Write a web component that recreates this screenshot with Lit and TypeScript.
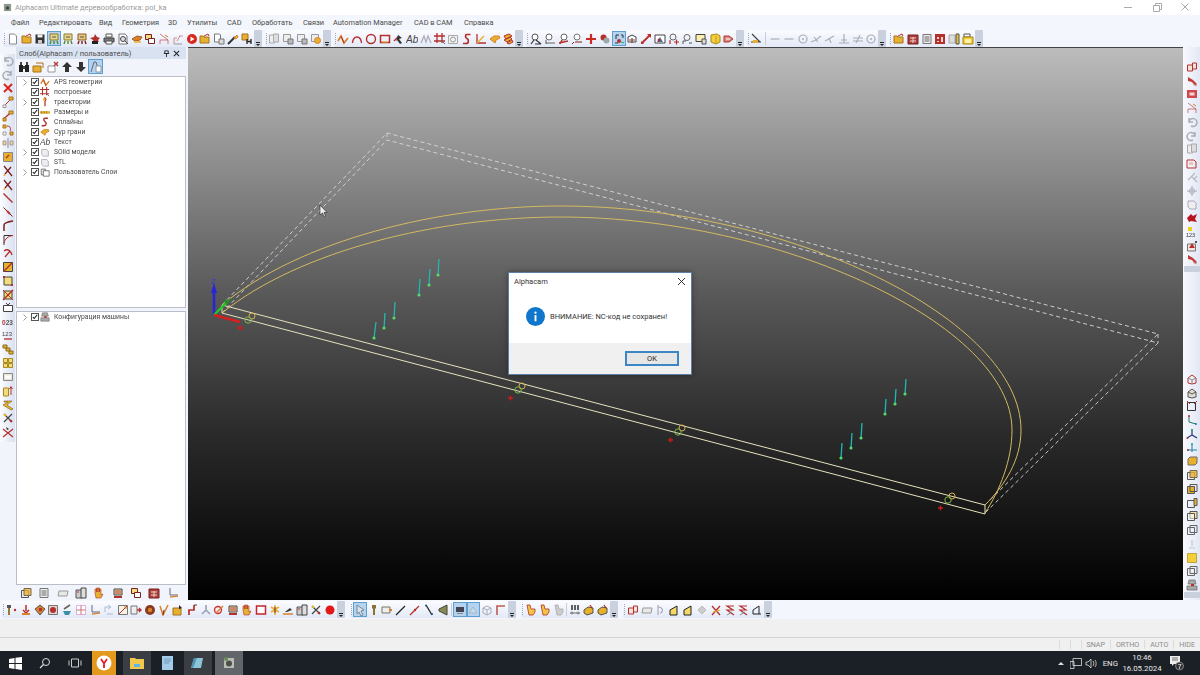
import { LitElement, html, css, svg } from 'lit';
import { customElement } from 'lit/decorators.js';

const R = '#b5302c', Y = '#e6b12e', O = '#d9822b', K = '#3a3a3a', D = '#7c1f1f', T = '#3d8fa8', L = '#f5dc7a';

// toolbar glyphs, all on a 12x12 box
const I: Record<string, any> = {
  doc: svg`<path d="M2.5 1h5l2 2v8h-7z" fill="#fff" stroke="#8a8a8a"/>`,
  open: svg`<path d="M1 10V3h3l1 1h5v6z" fill="${Y}" stroke="#a8701c"/><path d="M5 3l4-2 1 2" fill="none" stroke="${R}"/>`,
  save: svg`<path d="M1.500 1.500h9v9h-9z" fill="#333"/><path d="M3.500 1.500h5v3h-5z" fill="#eee"/><path d="M4 7h4v3.500H4z" fill="#ccc"/>`,
  nc: svg`<path d="M2 1h8v6H2z" fill="#e8d68a" stroke="#8a7a30"/><path d="M3 8l-1 3M6 8v3M9 8l1 3" stroke="#4f8a3a" stroke-width="1.400"/><path d="M4 4h4" stroke="#555"/>`,
  ncr: svg`<path d="M2 1h8v6H2z" fill="#e8c77a" stroke="#8a5a30"/><path d="M3 8l-1 3M6 8v3M9 8l1 3" stroke="${D}" stroke-width="1.400"/><path d="M4 4h4" stroke="#555"/>`,
  hit: svg`<path d="M1 5l4-1 1-3 2 3 3 1-2 2 1 2-4-1-1 2-1-3z" fill="${R}"/><path d="M3 8h6v3H3z" fill="#222"/>`,
  print: svg`<path d="M3 1h6v3H3z" fill="#fff" stroke="#555"/><path d="M1 5h10v4H1z" fill="#777" stroke="#444"/><path d="M3 8h6v3H3z" fill="#fff" stroke="#555"/>`,
  prev: svg`<path d="M2 1h6l2 2v8H2z" fill="#fff" stroke="#777"/><circle cx="6" cy="6" r="2.500" fill="#dde" stroke="#444"/><path d="M8 8l3 3" stroke="#444"/>`,
  tool: svg`<path d="M1 6l5-3 5 1-2 3-5 1z" fill="${O}" stroke="#a85a18"/><path d="M3 9h7" stroke="${Y}" stroke-width="1.500"/>`,
  boxes: svg`<path d="M1.500 1.500h6v5h-6z" fill="${L}" stroke="${D}"/><path d="M4.500 5.500h6v5h-6z" fill="#fff" stroke="${D}"/>`,
  cut: svg`<path d="M2 1l8 6M2 11V7h8v4" fill="none" stroke="${R}" stroke-opacity=".6"/><path d="M7 2l3 2" stroke="${O}"/>`,
  cut2: svg`<path d="M2 11V5h3M7 3h4M8 3l-3 5" fill="none" stroke="${R}" stroke-opacity=".5"/><path d="M2 11h8" stroke="#999"/>`,
  play: svg`<circle cx="6" cy="6" r="5" fill="#d8281e"/><path d="M4.500 3.500L8.500 6l-4 2.500z" fill="#fff"/>`,
  docs: svg`<path d="M1.500 1h5l1 1v7h-6z" fill="#fff" stroke="#777"/><path d="M6 6h5v5H6z" fill="#ddd" stroke="#777"/>`,
  wand: svg`<path d="M1 11L8 4" stroke="#333" stroke-width="2"/><path d="M7 5l3-3 1 2-2 2z" fill="${Y}" stroke="${O}"/>`,
  yh: svg`<path d="M1 1h6v6H1z" fill="${Y}" stroke="#a8701c"/><path d="M6 6v5M10 6v5M6 8.500h4" stroke="#222" stroke-width="1.300"/>`,
  gd: svg`<path d="M1.500 2h5v8h-5z" fill="#eee" stroke="#aaa"/><path d="M5.500 1h5v8h-5z" fill="#ddd" stroke="#aaa"/>`,
  gd2: svg`<path d="M1.500 1.500h7v7h-7z" fill="#eee" stroke="#999"/><path d="M6 6h5v5H6z" fill="#bbb" stroke="#777"/>`,
  gdy: svg`<path d="M1.500 1.500h7v7h-7z" fill="#eee" stroke="#999"/><circle cx="7.500" cy="7.500" r="3" fill="${Y}" stroke="${O}"/>`,
  zig: svg`<path d="M1 8l3-5 3 7 4-5" fill="none" stroke="${O}" stroke-width="1.700"/><path d="M4 3l3 7" stroke="${R}"/>`,
  arc: svg`<path d="M1.500 10a4.500 6 0 0 1 9 0" fill="none" stroke="${R}" stroke-width="1.400"/>`,
  circ: svg`<circle cx="6" cy="6" r="4.500" fill="none" stroke="${R}" stroke-width="1.400"/>`,
  rect: svg`<path d="M1.500 2.500h9v7h-9z" fill="none" stroke="${R}" stroke-width="1.500"/><path d="M3 9h6" stroke="${Y}"/>`,
  arrow: svg`<path d="M2 8l5-5" stroke="${R}" stroke-width="1.400"/><path d="M6 2l4 3-3 1 3 4-2 1-3-4-1 2z" fill="#333"/>`,
  ab: svg`<text x="0" y="10" font-family="Liberation Sans, sans-serif" font-style="italic" font-size="10" fill="#444">Ab</text>`,
  scr: svg`<path d="M1 10l3-7 2 6 2-6 3 7" fill="none" stroke="#aab" stroke-width="1.200"/>`,
  grid: svg`<path d="M3 0v10M8 0v10M0 3h11M0 8h11" stroke="${R}" stroke-width="1.300"/><path d="M7 7l4 4" stroke="#666"/>`,
  clock: svg`<path d="M1.500 2.500h9v8h-9z" fill="#f2f2f2" stroke="#aaa"/><circle cx="6" cy="6.500" r="2.500" fill="none" stroke="#999"/>`,
  s: svg`<path d="M9.500 1.500H6c-2 0-2 3 0 4s2 5-1 5H2" fill="none" stroke="${R}" stroke-width="1.700"/>`,
  ang: svg`<path d="M2 1v9h9" fill="none" stroke="${R}" stroke-width="1.300"/><path d="M2 10l7-7" stroke="${Y}" stroke-width="1.400"/>`,
  eye: svg`<path d="M1 6l4-3h5l1 2-4 2-1 3z" fill="${Y}" stroke="${O}"/>`,
  stk: svg`<path d="M2 3l5-2 3 2-6 3zM2 7l6-3 2 2-5 3zM5 10l5-3 1 2-4 2z" fill="${Y}" stroke="${R}"/>`,
  zk: svg`<circle cx="5" cy="4" r="3" fill="#fff" stroke="#555"/><path d="M1 11l3-4M5 11h6M6 7l5 4" stroke="#333" stroke-width="1.200"/>`,
  zg: svg`<circle cx="5" cy="4" r="3" fill="#fff" stroke="#666"/><path d="M2 11V7M2 10h9" stroke="#666" stroke-width="1.100"/>`,
  zr: svg`<circle cx="6" cy="4" r="3" fill="#fff" stroke="#666"/><path d="M1 10l9-2M4 7l-2 4" stroke="${R}" stroke-width="1.500"/>`,
  zl: svg`<circle cx="6" cy="4" r="3" fill="#fff" stroke="#777"/><path d="M3 9l-2 2M4 9h7" stroke="${D}"/>`,
  plus: svg`<path d="M6 1v10M1 6h10" stroke="#cc2a25" stroke-width="2.200"/>`,
  blob: svg`<circle cx="4.500" cy="4.500" r="3" fill="${R}"/><circle cx="7.500" cy="7.500" r="3" fill="#9aa"/>`,
  v3: svg`<path d="M3 6V2h3M2 10h3M8 2h2v3" fill="none" stroke="#333"/><circle cx="6" cy="8" r="2" fill="${R}"/><path d="M8 9l3 1" stroke="#2a7"/>`,
  cube: svg`<path d="M2 4l4-2 4 2v5H2z" fill="#fff" stroke="#444"/><path d="M3 7h6" stroke="${R}"/><path d="M6 5v5" stroke="#444"/>`,
  diag: svg`<path d="M2 10l8-8" stroke="${R}" stroke-width="1.800"/><path d="M7 1h4v4z" fill="${R}"/><path d="M1 8v3h3z" fill="${R}"/>`,
  pic: svg`<path d="M1 2h10v8H1z" fill="#fff" stroke="#444"/><path d="M3 9l3-5 3 5z" fill="#3a78b8"/><circle cx="5" cy="7" r="1.500" fill="${R}"/>`,
  zp: svg`<circle cx="5" cy="4" r="3" fill="none" stroke="#666"/><path d="M2 11V7M6 9h5M8.500 6.500v5" stroke="${R}" stroke-width="1.200"/>`,
  zm: svg`<circle cx="6" cy="4.500" r="3" fill="none" stroke="#666"/><path d="M2 11V8M2 8h3M8 10h3" stroke="#555"/>`,
  note: svg`<path d="M1 1.500h9v7H1z" fill="#fbeeb0" stroke="#444"/><path d="M7 6h4v5H7z" fill="#ddd" stroke="#555"/>`,
  shld: svg`<path d="M2 2l6-1 3 2v6l-4 2-5-2z" fill="#f2cf3b" stroke="#a8881c"/><path d="M7 11V3" stroke="#c69a1c"/>`,
  tag: svg`<path d="M1 3h5l4 3-4 3H1z" fill="#d98a80" stroke="${R}"/><path d="M3 6h4" stroke="#fff"/>`,
  trim: svg`<path d="M2 1l8 8M1 9h10" stroke="#444" stroke-width="1.200"/><path d="M3 7h5v3H3z" fill="${Y}"/>`,
  dash: svg`<path d="M1.500 6h9" stroke="#b0b4bc" stroke-width="1.300"/>`,
  rng: svg`<circle cx="6" cy="6" r="4" fill="none" stroke="#aaaeb6" stroke-width="1.200"/><circle cx="6" cy="6" r="1" fill="#aaaeb6"/>`,
  fk: svg`<path d="M1 9l5-2 5-4M4 4l4 5" fill="none" stroke="#aaaeb6" stroke-width="1.200"/>`,
  fk2: svg`<path d="M1 8c3-1 5-3 9-5M5 5l2 5" fill="none" stroke="#aaaeb6" stroke-width="1.200"/>`,
  per: svg`<path d="M6 1v9M1 10h10M3 7h6" stroke="#aaaeb6" stroke-width="1.200"/>`,
  eq: svg`<path d="M1 5h10M1 8h10M8 2L4 10" stroke="#aaaeb6" stroke-width="1.100"/>`,
  fgrid: svg`<path d="M1 2h10v9H1z" fill="#a9403a" stroke="#7c1f1f"/><path d="M3 5h6M3 8h6M6 4v6" stroke="#f0d0c8"/>`,
  list: svg`<path d="M2 1.500h8v9H2z" fill="#eee" stroke="#777"/><path d="M3.500 4h5M3.500 6h5M3.500 8h5" stroke="#666"/>`,
  fred: svg`<path d="M1 1h10v10H1z" fill="${R}"/><path d="M3 4h2v2H3zM7 4h2v5H7zM3 8h2v1H3z" fill="#f3d8d0"/>`,
  bar: svg`<path d="M1 2h6v8H1z" fill="#ddd" stroke="#aaa"/><path d="M8 1h3v10H8z" fill="#e0c23a" stroke="#555"/>`,
  foly: svg`<path d="M2 1h6v3H2z" fill="#fff" stroke="#555"/><path d="M1 4h10v7H1z" fill="#f5cd2e" stroke="#a8881c"/><path d="M3 6h6v4H3z" fill="#fff2a8"/>`,
  undo: svg`<path d="M3 2v4h4M3 6a4 4 0 1 1 2 4" fill="none" stroke="#a8adb6" stroke-width="1.500"/>`,
  redo: svg`<path d="M9 2v4H5M9 6a4 4 0 1 0-2 4" fill="none" stroke="#a8adb6" stroke-width="1.500"/>`,
  x: svg`<path d="M2 2l8 8M10 2l-8 8" stroke="#d62820" stroke-width="2"/>`,
  nod: svg`<path d="M1.500 10.500l8-8" stroke="${R}"/><path d="M7 1h4v3H7z" fill="${Y}" stroke="#a8701c"/><path d="M1 9h3v2.500H1z" fill="#fff" stroke="#999"/>`,
  nod2: svg`<path d="M1.500 9l8-7" stroke="${R}" stroke-width="1.300"/><path d="M7 1h4v3H7zM1 8h3v3H1z" fill="${Y}" stroke="#a8701c"/>`,
  nod3: svg`<path d="M1 1h3v3H1zM8 8h3v3H8z" fill="${Y}" stroke="#a8701c"/><path d="M5 2c4 0 4 3 3 5" fill="none" stroke="${R}"/><path d="M1 8h3v3H1z" fill="#fff" stroke="#999"/>`,
  mid: svg`<path d="M1 4h3v4H1zM8 4h3v4H8z" fill="#ecd58a" stroke="#a99"/><path d="M6 1v10" stroke="#88a"/>`,
  ybox: svg`<path d="M1.500 1.500h9v9h-9z" fill="${Y}" stroke="#888"/><path d="M4 7l3-3" stroke="${R}" stroke-width="1.500"/>`,
  xl: svg`<path d="M2 1l8 10M9 2L3 9" stroke="${D}" stroke-width="1.300"/><path d="M3 9l-1 2" stroke="${Y}" stroke-width="1.500"/>`,
  line: svg`<path d="M1.500 1.500l9 9" stroke="${R}" stroke-width="1.400"/>`,
  line2: svg`<path d="M1.500 1.500l9 9" stroke="${D}"/><path d="M5 5l3 3" stroke="${R}" stroke-width="1.800"/>`,
  fil: svg`<path d="M2 11V5c0-2 2-3 9-4" fill="none" stroke="${D}" stroke-width="1.500"/>`,
  fil2: svg`<path d="M2 11V1.500h9" fill="none" stroke="#333"/><path d="M2 9c1-4 4-7 9-7.500" fill="none" stroke="${R}"/>`,
  pick: svg`<path d="M2 4c4-3 7 0 8 4M3 10l5-6" fill="none" stroke="${R}" stroke-width="1.300"/>`,
  yd: svg`<path d="M1.500 1.500h9v9h-9z" fill="${Y}" stroke="#444"/><path d="M1.500 10.500l9-9" stroke="${R}" stroke-width="1.500"/>`,
  yc: svg`<path d="M2 2h8v8H2z" fill="${L}" stroke="#444"/><path d="M1 1h2v2H1zM9 9h2v2H9z" fill="${R}"/>`,
  yx: svg`<path d="M2 2h8v8H2z" fill="${L}" stroke="#444"/><path d="M1 11L11 1" stroke="${R}" stroke-width="1.500"/><path d="M1 1l10 10" stroke="${R}"/>`,
  wr: svg`<path d="M1.500 3.500h9v6h-9z" fill="#fff" stroke="#444"/><path d="M4 1l2 2 2-2" fill="none" stroke="#444"/>`,
  n0: svg`<text x="0" y="9" font-family="Liberation Sans, sans-serif" font-size="6.500" font-weight="700" fill="#555"><tspan fill="${R}">0</tspan>23</text>`,
  n1: svg`<text x="0" y="6" font-family="Liberation Sans, sans-serif" font-size="6" fill="#444">123</text><path d="M2 9h8" stroke="${R}" stroke-width="1.300"/>`,
  chain: svg`<path d="M1 1h4v3H1zM4 4h4v3H4zM7 7h4v3H7z" fill="${Y}" stroke="#8a6a18"/>`,
  four: svg`<path d="M1.500 1.500h4v4h-4zM6.500 1.500h4v4h-4zM1.500 6.500h4v4h-4zM6.500 6.500h4v4h-4z" fill="${L}" stroke="#a8881c"/>`,
  frm: svg`<path d="M1.500 2.500h9v7h-9z" fill="#e9e6d8" stroke="#888"/><path d="M3 4.500h6v3H3z" fill="#fff"/>`,
  yar: svg`<path d="M1.500 3h5v8h-5z" fill="${L}" stroke="#a8881c"/><path d="M9 10V2M7.500 4L9 1.500 10.500 4" fill="none" stroke="${R}"/>`,
  band: svg`<path d="M2 2h8l-5 4 6 4-2 1-8-5 5-3H2z" fill="${Y}" stroke="#7a5a18" stroke-width=".6"/>`,
  sx: svg`<path d="M2 2l8 8M10 2l-8 8" stroke="#444" stroke-width="1.200"/><circle cx="3" cy="3" r="1.300" fill="${Y}"/><circle cx="9" cy="9" r="1.300" fill="${R}"/>`,
  sx2: svg`<path d="M1 3l10 8M11 3L1 11" stroke="${R}" stroke-width="1.200"/><path d="M4 1l3 2-2 1z" fill="#333"/>`,
  pin: svg`<path d="M2 4h2v7H2z" fill="#9a7a30"/><path d="M1 1h4v3H1z" fill="#555"/><circle cx="9" cy="6" r="1.200" fill="${R}"/>`,
  dn: svg`<path d="M6 1v6M3 6l3 3 3-3" fill="none" stroke="${R}" stroke-width="1.500"/><path d="M2 10h8" stroke="${O}" stroke-width="2"/>`,
  rb: svg`<path d="M1 5l5-4 5 4-5 6z" fill="${O}" stroke="#555"/><path d="M5 4h3v3H5z" fill="${R}"/>`,
  sq: svg`<path d="M1.500 1.500h9v9h-9z" fill="#e0d5c8" stroke="#777"/><circle cx="6" cy="6" r="3" fill="${R}"/>`,
  bowl: svg`<path d="M2 7h8l-2 4H4z" fill="${T}"/><path d="M3 5l6-4" stroke="#665" stroke-width="1.600"/>`,
  win: svg`<path d="M1.500 1.500h9v9h-9z" fill="#fff" stroke="#b09"  stroke-opacity=".3"/><path d="M6 1.500v9M1.500 6h9" stroke="#c77"/>`,
  ln: svg`<path d="M3 1v7h8" fill="none" stroke="#668" /><path d="M3 10c3 0 6-1 8-1" stroke="${O}" fill="none" stroke-width="1.300"/>`,
  gar: svg`<path d="M2 8V3h5M5 1l3 2-3 2M4 10h6" fill="none" stroke="#a8bcd0"/>`,
  ck: svg`<path d="M1.500 1.500h9v9h-9z" fill="#f7f3e8" stroke="#777"/><path d="M2 10l8-8" stroke="${R}"/><path d="M7 3l2 0 0 2" stroke="${O}" fill="none"/>`,
  dbox: svg`<path d="M1 2h6v8H1z" fill="#eee" stroke="#777"/><path d="M7 6h4M9 4l2 2-2 2" fill="none" stroke="${R}" stroke-width="1.300"/>`,
  ball: svg`<circle cx="6" cy="6" r="5" fill="#8a3a20"/><circle cx="6" cy="6" r="2.200" fill="${O}"/>`,
  vv: svg`<path d="M2 2l3 9 5-10" fill="none" stroke="${O}" stroke-width="1.500"/><path d="M5 11l1-5" stroke="${D}"/>`,
  fyd: svg`<path d="M1 4h8v7H1z" fill="${Y}" stroke="#a8701c"/><path d="M7 1l3 3-3 1z" fill="#223"/>`,
  j: svg`<path d="M3 11V6h5V1" fill="none" stroke="${R}" stroke-width="1.700"/><path d="M8 1h3" stroke="#444"/>`,
  jg: svg`<path d="M6 1v5l4 4M6 6l-4 4" fill="none" stroke="#9aa6b6" stroke-width="1.700"/>`,
  rg: svg`<circle cx="5" cy="6" r="3.500" fill="none" stroke="#c33" stroke-width="1.400"/><path d="M3 9l7-7" stroke="${O}" stroke-width="1.500"/>`,
  lst: svg`<path d="M2 2h8v6H2z" fill="#eadfa8" stroke="#444"/><path d="M3 4h6M3 6h6" stroke="${R}"/><path d="M2 9h8v2H2z" fill="${R}"/>`,
  hand: svg`<path d="M2 6V2h1.500v3V1H5v4V1h1.500v4V2H8v6l2-1-2 4H3z" fill="${Y}" stroke="${R}" stroke-width=".6"/>`,
  redrect: svg`<path d="M1.500 2h9v8h-9z" fill="#fff" stroke="#c3262c" stroke-width="1.500"/>`,
  rfill: svg`<path d="M1 2h10v8H1z" fill="#d0474c"/><path d="M3.500 4.500h5v3h-5z" fill="#f7d8d8"/>`,
  yy: svg`<path d="M6 1v10M2 3l8 5M10 3L2 8" stroke="${Y}" stroke-width="1.600"/><path d="M6 3v6" stroke="${D}"/>`,
  pen: svg`<path d="M1 10h10" stroke="${O}" stroke-width="1.500"/><path d="M3 8l5-4 2 2-5 2z" fill="${K}"/>`,
  tab: svg`<path d="M1 3h6v8H1z" fill="#ccc" stroke="#555"/><path d="M6 1h5v10H6z" fill="#ddd" stroke="#444"/><path d="M2 5h2" stroke="${R}"/>`,
  dot: svg`<circle cx="6" cy="6" r="4.500" fill="#e01818"/>`,
  sel: svg`<path d="M3 1l7 5-3 1 2 4-2 1-2-4-2 2z" fill="#d8e4ee" stroke="#789"/>`,
  tall: svg`<path d="M4 1h4v3l-1 1v6H5V5L4 4z" fill="#8a7430"/>`,
  slot: svg`<path d="M1 3h8v6H1z" fill="#eee" stroke="#776"/><path d="M8 6h3" stroke="${O}" stroke-width="2"/>`,
  p1: svg`<path d="M1 11l9-9" stroke="#222" stroke-width="1.300"/>`,
  p2: svg`<path d="M1 11l9-9" stroke="${R}" stroke-width="1.300"/><circle cx="6" cy="6" r="1.200" fill="${R}"/>`,
  p3: svg`<path d="M3 1l6 10" stroke="#222" stroke-width="1.300"/><circle cx="3" cy="1.500" r="1" fill="#258"/><circle cx="9" cy="10" r="1" fill="#258"/>`,
  tri: svg`<path d="M10 1v10L2 7V5z" fill="#8a8a50" stroke="#444"/>`,
  view: svg`<path d="M2 3h8v5H2z" fill="#445"/><path d="M3 9h6v1H3z" fill="#888"/>`,
  ghost: svg`<path d="M2 9l4-6 4 6z" fill="#c8dcea" stroke="#a0b8cc"/>`,
  wire: svg`<path d="M2 4l4-2 4 2v5l-4 2-4-2zM2 4l4 2 4-2M6 6v5" fill="none" stroke="#aab"/>`,
  frd: svg`<path d="M2 11V2h8" fill="none" stroke="#c05a50" stroke-width="1.600"/>`,
  hr: svg`<path d="M2 1h3l1 4h4v3l-2 3H4z" fill="#f2c544" stroke="${R}" stroke-width=".8"/>`,
  hg: svg`<path d="M2 1h3l1 4h4v3l-2 3H4z" fill="#ccc" stroke="#aaa" stroke-width=".8"/>`,
  pins: svg`<path d="M3 1v5M6 1v5M9 1v5" stroke="#222" stroke-width="1.400"/><path d="M1 9h10" stroke="#777"/><circle cx="3" cy="9" r="1" fill="#fff" stroke="#333" stroke-width=".6"/><circle cx="9" cy="9" r="1" fill="#fff" stroke="#333" stroke-width=".6"/>`,
  ybk: svg`<path d="M1 6l4-3 5 1v5l-6 2-3-2z" fill="${Y}" stroke="#333" stroke-width=".8"/><path d="M7 1l2 3" stroke="${R}" stroke-width="1.300"/>`,
  bx: svg`<path d="M1.500 4h5v6h-5zM6.500 2h4v6h-4z" fill="#f2e2dc" stroke="${R}"/>`,
  pill: svg`<path d="M2 4h9l-1 5H1z" fill="#e8e8e8" stroke="#999"/>`,
  hk: svg`<path d="M3 1v10M3 3c5 0 6 5 2 6" fill="none" stroke="#aab" stroke-width="1.200"/>`,
  lf: svg`<path d="M2 11V6l7-4v9z" fill="#f6d86a" stroke="#222"/>`,
  dia: svg`<path d="M6 2l4 4-4 4-4-4z" fill="#ccc" stroke="#bbb"/>`,
  cr: svg`<path d="M2 2l8 9M10 2L2 11" stroke="${R}" stroke-width="1.300"/><path d="M3 8l7-2" stroke="${Y}" stroke-width="1.300"/>`,
  sr: svg`<path d="M10 2H3l6 4H3l7 5" fill="none" stroke="${R}" stroke-width="1.200"/><path d="M3 11l5-3" stroke="#888"/>`,
  ld: svg`<path d="M2 10h8M2 10V6l6-4v8" fill="none" stroke="#222"/>`,
  ry: svg`<path d="M1 3h7l2 2v6H1z" fill="none" stroke="${R}"/><path d="M3 5h4v3H3z" fill="#f2c0b8"/>`,
  gx: svg`<path d="M2 9l7-7M6 6l5 5M8 8l3-3" stroke="#b6bac2" stroke-width="1.200"/>`,
  cross: svg`<path d="M6 1v10M1 6h10" stroke="#aab"/><circle cx="6" cy="6" r="2.500" fill="none" stroke="#aab"/>`,
  gcube: svg`<path d="M2 3h6l2 2v6H4l-2-2z" fill="#eee" stroke="#aab"/>`,
  rhit: svg`<path d="M1 6l4-4 2 2 4-2-2 5 2 3-6-1-2 1z" fill="#b8171f"/>`,
  n123: svg`<path d="M2 1h4v4H2z" fill="#ecd020"/><text x="0" y="11" font-family="Liberation Sans, sans-serif" font-size="5.500" fill="#334">123</text>`,
  rbox: svg`<path d="M1.500 4h8v7h-8z" fill="#f2e6e0" stroke="#777"/><path d="M3 8l3-5 3 5z" fill="${R}"/><circle cx="10" cy="2" r="1" fill="#222"/>`,
  rham: svg`<path d="M2 2l5 3 4 4-2 2-3-4-4-1z" fill="#c23a36"/><path d="M7 9l4 2" stroke="#d8a090"/>`,
  rcube: svg`<path d="M2 5l4-3 4 3v5l-4 1-4-1z" fill="none" stroke="${R}"/><path d="M2 5l4 2 4-2M6 7v4" fill="none" stroke="#888"/>`,
  dcube: svg`<path d="M2 5l4-3 4 3v5l-4 1-4-1z" fill="#ddd" stroke="#554"/><path d="M2 5l4 2 4-2" fill="none" stroke="#554"/>`,
  rfr: svg`<path d="M1.500 2.500h8v8h-8z" fill="none" stroke="#333"/><path d="M1 1l3 3M11 1L8 4" stroke="${R}"/>`,
  axv: svg`<path d="M3 2v6l7 2" fill="none" stroke="#276"/><circle cx="3" cy="2" r="1" fill="${R}"/><circle cx="10" cy="10" r="1" fill="#27c"/>`,
  ax3: svg`<path d="M6 1v6L1 10M6 7l5 3" fill="none" stroke="#237" stroke-width="1.200"/><circle cx="6" cy="2" r="1" fill="#2a7"/><circle cx="1.500" cy="10" r="1" fill="${R}"/>`,
  ax4: svg`<path d="M6 2v8M1 8h10" stroke="#28a" stroke-width="1.100"/><circle cx="6" cy="2" r="1" fill="#2a7"/><circle cx="2" cy="8" r="1" fill="${R}"/>`,
  yb1: svg`<path d="M2 4l2-2h7v6l-2 2H2z" fill="${Y}" stroke="#766"/>`,
  yb2: svg`<path d="M1.500 3.500h7v7h-7z" fill="#eee" stroke="#555"/><path d="M4 1.500h7v7H4z" fill="${Y}" stroke="#765" fill-opacity=".8"/>`,
  yb3: svg`<path d="M1.500 3.500h7v7h-7z" fill="${Y}" stroke="#555"/><path d="M4 1.500h7v7H4z" fill="none" stroke="#555"/>`,
  yb4: svg`<path d="M1.500 3.500h7v7h-7z" fill="none" stroke="#555"/><path d="M8 1.500h3v7H8z" fill="${Y}" stroke="#555"/>`,
  yb5: svg`<path d="M4 1.500h7v7H4z" fill="#f4e6b0" stroke="#555"/><path d="M1.500 3.500h7v7h-7z" fill="#fff8" stroke="#555"/>`,
  gb: svg`<path d="M1.500 3.500h7v7h-7zM4 1.500h7v7H4z" fill="none" stroke="#666"/>`,
  gpin: svg`<path d="M6 2v6M3 10h6" stroke="#bcc" stroke-width="1.200"/>`,
  ysq: svg`<path d="M1.500 1.500h9v9h-9z" fill="#f2cf3b" stroke="#c2a43a"/>`,
  mach: svg`<path d="M3 1h6l1 4H2zM1 7h10v4H1z" fill="#aaa" stroke="#666" stroke-width=".7"/><path d="M5 5h3v2H5z" fill="${R}"/>`,
  wr2: svg`<path d="M5 1c2 0 3 2 1 4v6" fill="none" stroke="${R}" stroke-width="1.500"/><circle cx="5" cy="3" r="1.500" fill="${Y}"/>`,
  size: svg`<path d="M0 5h12v3H0z" fill="${Y}"/><path d="M2 5v3M5 5v3M8 5v3" stroke="#a8701c"/>`,
  tab2: svg`<path d="M1.500 2.500h5v7h-5z" fill="#eee" stroke="#666"/><path d="M4 4.500h7v6.500H4z" fill="#fff" stroke="#666"/>`,
  bino: svg`<path d="M1 4h4v7H1zM7 4h4v7H7z" fill="#222"/><path d="M2 1h2v3H2zM8 1h2v3H8zM5 5h2v3H5z" fill="#444"/>`,
  ylay: svg`<path d="M1 5h8v6H1z" fill="${Y}" stroke="#a8701c"/><path d="M4 2h7v5" fill="none" stroke="#a8701c"/>`,
  xlay: svg`<path d="M1 5h7v6H1z" fill="#fff" stroke="#999"/><path d="M7 1l4 4M11 1L7 5" stroke="${R}" stroke-width="1.300"/>`,
  up: svg`<path d="M6 1l5 5H8v5H4V6H1z" fill="#333"/>`,
  down: svg`<path d="M6 11L1 6h3V1h4v5h3z" fill="#333"/>`,
  tog: svg`<path d="M1 11L4 1h2l3 10" fill="none" stroke="#667"/><path d="M6 5h5v6H6z" fill="#fff" stroke="#89a"/>`,
};

const parse = (s: string) => s.trim().split(/\s+/);

const TOP = [
  'doc open save nc! nc ncr hit print prev tool boxes cut cut2 play open docs wand yh ^',
  'gd gd2 gd2 gdy ^',
  'zig arc circ rect arrow ab scr grid clock s ang eye stk ^',
  'zk zg zr zl plus blob v3! cube diag pic zp zm note shld tag ^',
  'trim | dash dash rng fk fk2 per eq rng ^',
  'open fgrid list fred bar foly ^',
];
const LEFT = 'undo redo x nod nod2 nod3 mid ybox xl xl line line2 fil fil2 pick yd yc yx wr n0 n1 chain four frm yar band sx sx2';
const RIGHT_A = 'bx rham rfill cut undo redo gd ry gx cross gcube rhit n123 rbox rham ^';
const RIGHT_B = 'rcube dcube rfr axv ax3 ax4 yb1 yb2 yb3 yb4 yb5 gb gpin ysq gb mach ^';
const BOTTOM = [
  'pin dn rb sq bowl win ln gar ck dbox ball vv fyd j jg rg lst hand redrect yy pen tab sx dot ^',
  'sel! tall slot p1 p2 p3 tri | view! ghost! wire frd ^',
  'hr hr hg | pins ybk ybk ^',
  'bx pill hk lf lf dia cr sr sr ld ^',
];
const TABS = 'yb2 list pill tab hand lst boxes fgrid ln';

const MENU: [string, number][] = [
  ['Файл', 28], ['Редактировать', 60], ['Вид', 23], ['Геометрия', 46], ['3D', 19], ['Утилиты', 40],
  ['CAD', 25], ['Обработать', 51], ['Связи', 30], ['Automation Manager', 81], ['CAD в CAM', 50], ['Справка', 40],
];
const LAYERS: [boolean, string, string][] = [
  [true, 'zig', 'APS геометрии'], [false, 'grid', 'построение'], [true, 'wr2', 'траектории'],
  [false, 'size', 'Размеры и'], [false, 's', 'Сплайны'], [false, 'eye', 'Сур грани'],
  [false, 'ab', 'Текст'], [true, 'gcube', 'SOlid модели'], [false, 'gcube', 'STL'], [true, 'tab2', 'Пользователь Слои'],
];

const NEEDLES = [
  [374, 338, 376, 322], [384, 328, 385, 313], [394, 318, 395, 302], [419, 295, 420, 279], [429, 285, 430, 269], [438, 275, 439, 259],
  [841, 458, 842, 443], [851, 448, 852, 433], [861, 438, 862, 423], [885, 414, 886, 399], [895, 404, 896, 389], [905, 394, 906, 379],
];
const MARKS = [[251, 317], [521, 387], [681, 429], [951, 497]];

function icon(name: string) {
  if (name === '^') return html`<span class="grip"><i></i></span>`;
  if (name === '|') return html`<span class="sep"></span>`;
  const on = name.endsWith('!');
  const k = on ? name.slice(0, -1) : name;
  return html`<span class="ic ${on ? 'on' : ''}"><svg viewBox="0 0 12 12" width="12" height="12">${I[k]}</svg></span>`;
}
const band = (s: string) => html`<div class="band">${parse(s).map(icon)}</div>`;
const vertical = (k: string) => k === '^' ? icon(k) : html`<span class="vic"><svg viewBox="0 0 12 12" width="12" height="12">${I[k]}</svg></span>`;

@customElement('app-root')
export class AppRoot extends LitElement {
  static styles = css`
    :host {
      display: block;
      width: 1200px;
      height: 675px;
      overflow: hidden;
      font-family: Roboto, 'Noto Sans', sans-serif;
      font-size: 7.400px;
      color: #4a4a4a;
      background: #f1f4fb;
    }
    .soft { filter: blur(0.35px); width: 100%; height: 100%; display: flex; flex-direction: column; }
    .title { height: 15px; background: #fff; display: flex; align-items: center; padding-left: 3px; color: #9a9a9a; font-size: 7.450px; }
    .title .name { margin-left: 3px; flex: 1; }
    .title .wc { width: 28.500px; display: flex; justify-content: center; }
    .menu { height: 15px; display: flex; align-items: center; padding-left: 11px; background: #f3f6fc; }
    .menu span { white-space: nowrap; }
    .tools { height: 17px; display: flex; align-items: center; padding-left: 3px; gap: 3px; background: #f3f6fc; }
    .band { display: flex; align-items: center; height: 17px; background: linear-gradient(#fbfcff, #e3e9f6); border-radius: 2px; }
    .band::before { content: ''; width: 0; height: 11px; margin: 0 1px; border-left: 1px dotted #a0a8b8; flex: none; }
    .bands-bottom { height: 19px; display: flex; align-items: center; padding-left: 2px; gap: 5px; background: #f3f6fc; }
    .bands-bottom .ic { width: 13.830px; }
    .bands-bottom .sep { margin: 0 1px; }
    .ic { width: 13.750px; height: 15px; display: flex; align-items: center; justify-content: center; flex: none; box-sizing: border-box; }
    .ic.on { background: #b5d3ee; outline: 1px solid #5f9fd0; outline-offset: -1px; }
    .sep { width: 1px; height: 13px; background: #c8ced8; margin: 0 2px; flex: none; }
    .grip { width: 8px; height: 17px; background: #c9d0de; position: relative; flex: none; border-radius: 1px; }
    .grip i { position: absolute; left: 2px; bottom: 2px; width: 4px; height: 3px; border-top: 1px solid #222; box-sizing: border-box; }
    .grip i::after { content: ''; position: absolute; left: 0; top: 1px; border: 2px solid transparent; border-top-color: #222; border-bottom: 0; }
    .main { height: 553px; display: flex; }
    .left { width: 16px; flex: none; display: flex; flex-direction: column; padding-top: 7px; box-sizing: border-box; }
    .left .col { background: linear-gradient(90deg, #fbfcff, #d9e0f0); display: flex; flex-direction: column; align-items: center; width: 15px; padding-bottom: 3px; }
    .vic { height: 13.760px; display: flex; align-items: center; justify-content: center; }
    .panel { width: 170px; flex: none; display: flex; flex-direction: column; }
    .phead { height: 12px; background: #d9e2f1; display: flex; align-items: center; padding: 0 3px; font-size: 7.500px; }
    .phead span { flex: 1; }
    .phead svg { margin-right: 3px; }
    .pbar { height: 15px; display: flex; align-items: center; padding-left: 1px; margin-bottom: 2px; }
    .pbar .ic { width: 14.300px; }
    .tree { background: #fff; border: 1px solid #b9bec8; box-sizing: border-box; }
    .tree.a { height: 232px; }
    .tree.b { height: 274px; margin-top: 3px; }
    .row { height: 10px; display: flex; align-items: center; white-space: nowrap; font-size: 6.800px; }
    .chev { width: 13px; flex: none; display: flex; justify-content: flex-end; padding-right: 3px; box-sizing: border-box; }
    .box { width: 8px; height: 8px; flex: none; border: 1px solid #555; box-sizing: border-box; background: #fff; display: flex; margin-right: 1px; margin-left: 1px; }
    .row .gl { width: 11px; height: 10px; display: flex; align-items: center; margin-right: 3px; flex: none; }
    .tabs { flex: 1; display: flex; align-items: center; padding-left: 1px; }
    .tabs .ic { width: 18.300px; }
    .view { width: 995px; height: 553px; margin-left: 2px; flex: none; position: relative; background: linear-gradient(#bcbcbc 0, #585858 45%, #2a2a2a 70%, #000 100%); border-top: 1px solid #444; box-sizing: border-box; }
    .view > svg { display: block; position: absolute; inset: -1px 0 0 0; }
    .right { width: 17px; flex: none; display: flex; flex-direction: column; align-items: center; background: linear-gradient(90deg, #f8f9fe, #e2e7f4); }
    .right .col { display: flex; flex-direction: column; align-items: center; }
    .right .col.top { padding-top: 13px; }
    .right .col.bot { padding-bottom: 2px; }
    .right .col .grip { width: 16px; height: 6px; }
    .right .col .grip i { display: none; }
    .right .space { flex: 1; }
    .fill { height: 18px; background: #f0f0f0; border-bottom: 1px solid #d4d4d4; }
    .status { height: 13px; background: #f0f0f0; display: flex; align-items: center; justify-content: flex-end; color: #8c8c8c; font-size: 7.100px; }
    .status span { padding: 0 5px; border-left: 1px solid #dcdcdc; min-height: 9px; }
    .task { height: 24px; background: #1b2026; display: flex; align-items: stretch; color: #e8e8e8; }
    .tb { display: flex; align-items: center; justify-content: center; flex: none; width: 30px; }
    .tb.y { width: 24px; margin: 0 7px 0 2px; background: #e39a1c; }
    .tb.app { width: 28px; background: #3a3d41; margin-right: 3px; }
    .tb.note { width: 26px; margin-right: 4px; }
    .tb.cur { background: #62666a; }
    .tray { margin-left: auto; display: flex; align-items: center; font-size: 7.800px; }
    .clock { width: 40px; text-align: center; line-height: 11px; margin: 0 7px 0 4px; }
    .dialog { position: absolute; left: 320px; top: 224px; width: 184px; height: 103px; background: #fff; border: 1px solid #5c7fa6; box-sizing: border-box; display: flex; flex-direction: column; box-shadow: 0 0 6px rgba(0, 0, 0, .35); }
    .dhead { height: 16px; display: flex; align-items: center; padding: 0 5px; font-size: 7.500px; color: #333; }
    .dhead span { flex: 1; }
    .dbody { height: 54px; display: flex; align-items: center; padding-left: 17px; color: #333; font-size: 7.500px; white-space: nowrap; }
    .dbody svg { margin-right: 5px; }
    .dfoot { flex: 1; background: #f0f0f0; display: flex; align-items: center; justify-content: flex-end; padding-right: 12px; }
    .ok { width: 54px; height: 15px; border: 2px solid #3d86c6; box-sizing: border-box; background: #e6e6e6; display: flex; align-items: center; justify-content: center; font-size: 7.500px; color: #222; }
  `;

  private scene() {
    return svg`
      <g fill="none" stroke="#d8d8d8" stroke-width=".9" stroke-dasharray="4 3">
        <path d="M222 305L387 133L1158 334L985 505"/>
        <path d="M222 313L387 140L1158 343L985 513"/>
        <path d="M387 133v7M1158 334v9"/>
      </g>
      <g fill="none" stroke="#d4ba62" stroke-width="1">
        <path d="M222 305C300 240 440 206 560 206C790 206 1021 320 1021 430C1021 460 1005 485 985 505"/>
        <path d="M222 313C300 250 440 217 560 217C780 217 1012 325 1012 430C1012 460 1000 490 985 513"/>
      </g>
      <g fill="none" stroke="#e6e2bc" stroke-width="1">
        <path d="M222 305L985 505V514L222 313z"/>
      </g>
      ${NEEDLES.map(([a, b, c, d]) => svg`
        <path d="M${a} ${b}L${c} ${d}" stroke="#22b8b0" stroke-width="1.300"/>
        <circle cx="${a}" cy="${b}" r="1.600" fill="#58d868"/>
      `)}
      ${MARKS.map(([x, y]) => svg`
        <circle cx="${x + 1}" cy="${y - 1}" r="3" fill="none" stroke="#d8b050"/>
        <circle cx="${x - 3}" cy="${y + 3}" r="3.200" fill="none" stroke="#7ab848"/>
        <path d="M${x - 13} ${y + 11}h5M${x - 10.500} ${y + 8.500}v5" stroke="#c81e1e" stroke-width="1.300"/>
      `)}
      <path d="M214 315V292" stroke="#2626d8" stroke-width="2.600"/>
      <path d="M214 283l-3 10h6z" fill="#2626d8"/>
      <text x="211" y="284" font-family="Liberation Sans, sans-serif" font-size="7" fill="#3434e8">Z</text>
      <path d="M214 315L226 303" stroke="#22c822" stroke-width="2.400"/>
      <path d="M232 298l-9 3 4 4z" fill="#2d8a2d"/>
      <path d="M214 315L240 322" stroke="#d81e1e" stroke-width="2.400"/>
      <text x="236" y="330" font-family="Liberation Sans, sans-serif" font-size="6" fill="#d81e1e">X</text>
      <path d="M320 205v10l2.500-2 1.500 3.500 1.500-.7-1.500-3.300h3z" fill="#eee" stroke="#222" stroke-width=".6"/>
    `;
  }

  render() {
    return html`
      <div class="soft">
        <div class="title">
          <svg viewBox="0 0 10 10" width="9" height="9"><path d="M1 1h8v8H1z" fill="#8f9a8e"/><circle cx="5" cy="5.500" r="2" fill="#444"/></svg>
          <span class="name">Alphacam Ultimate деревообработка: pol_ka</span>
          <span class="wc"><svg width="9" height="9"><path d="M0 4.500h8" stroke="#aaa"/></svg></span>
          <span class="wc"><svg width="9" height="9"><path d="M.5 2.500h6v6h-6zM2.500 2.500v-2h6v6h-2" fill="none" stroke="#aaa"/></svg></span>
          <span class="wc"><svg width="9" height="9"><path d="M.5.500l7 7M7.500.500l-7 7" stroke="#aaa"/></svg></span>
        </div>
        <div class="menu">${MENU.map(([t, w]) => html`<span style="width:${w}px">${t}</span>`)}</div>
        <div class="tools">${TOP.map(band)}</div>
        <div class="main">
          <div class="left"><div class="col">${parse(LEFT).map(vertical)}</div></div>
          <div class="panel">
            <div class="phead"><span>Слоб(Alphacam / пользователь)</span>
              <svg viewBox="0 0 8 8" width="7" height="7"><path d="M2 1h4v3H2zM1 4h6M4 4v4" fill="none" stroke="#222"/></svg>
              <svg viewBox="0 0 8 8" width="7" height="7"><path d="M1 1l6 6M7 1L1 7" stroke="#222" stroke-width="1.200"/></svg>
            </div>
            <div class="pbar">${parse('bino ylay xlay up down tog!').map(icon)}</div>
            <div class="tree a">${LAYERS.map(r => this.row(r))}</div>
            <div class="tree b">${this.row([true, 'mach', 'Конфигурация машины'])}</div>
            <div class="tabs">${parse(TABS).map(icon)}</div>
          </div>
          <div class="view">
            <svg viewBox="188 47 995 553" width="995" height="553">${this.scene()}</svg>
            <div class="dialog">
              <div class="dhead"><span>Alphacam</span><svg width="9" height="9"><path d="M1 1l7 7M8 1L1 8" stroke="#333"/></svg></div>
              <div class="dbody">
                <svg viewBox="0 0 20 20" width="19" height="19"><circle cx="10" cy="10" r="10" fill="#0f76cc"/><path d="M9 8.500h2V15H9z" fill="#fff"/><circle cx="10" cy="6" r="1.200" fill="#fff"/></svg>
                ВНИМАНИЕ: NC-код не сохранен!
              </div>
              <div class="dfoot"><div class="ok">OK</div></div>
            </div>
          </div>
          <div class="right">
            <div class="col top">${parse(RIGHT_A).map(vertical)}</div>
            <div class="space"></div>
            <div class="col bot">${parse(RIGHT_B).map(vertical)}</div>
          </div>
        </div>
        <div class="bands-bottom">${BOTTOM.map(band)}</div>
        <div class="fill"></div>
        <div class="status"><span></span><span></span><span>SNAP</span><span>ORTHO</span><span>AUTO</span><span>HIDE</span></div>
        <div class="task">
          <div class="tb"><svg width="13" height="13" viewBox="0 0 13 13"><path d="M0 2l5.500-1v5H0zM6.500 .8L13 0v6H6.500zM0 7h5.500v5L0 11zM6.500 7H13v6l-6.500-1z" fill="#fff"/></svg></div>
          <div class="tb"><svg width="12" height="12" viewBox="0 0 12 12"><circle cx="7" cy="5" r="3.500" fill="none" stroke="#ddd"/><path d="M4.500 7.500L1 11" stroke="#ddd" stroke-width="1.200"/></svg></div>
          <div class="tb"><svg width="14" height="10" viewBox="0 0 14 10"><path d="M3.500 1h7v8h-7zM1 2.500v5M13 2.500v5" fill="none" stroke="#ccc"/></svg></div>
          <div class="tb y"><svg width="16" height="16" viewBox="0 0 16 16"><circle cx="8" cy="8" r="7.500" fill="#fff"/><path d="M5 4l3 4.500L11 4M8 8.500V13" fill="none" stroke="#e02020" stroke-width="1.800"/></svg></div>
          <div class="tb app"><svg width="14" height="12" viewBox="0 0 14 12"><path d="M0 1h5l1 1h8v10H0z" fill="#f2c94c"/><path d="M4 7h6v3H4z" fill="#5cb8e6"/></svg></div>
          <div class="tb note"><svg width="11" height="14" viewBox="0 0 11 14"><path d="M0 0h11v14H0z" fill="#a4cbe8"/><path d="M2 3h7M2 5h7M2 7h5" stroke="#6f9cbe"/></svg></div>
          <div class="tb app"><svg width="14" height="14" viewBox="0 0 14 14"><path d="M3 2h9l-2 10H0z" fill="#8cc4d8"/><path d="M3 2h3L2 12H0z" fill="#4f93ad"/></svg></div>
          <div class="tb app cur"><svg width="14" height="14" viewBox="0 0 14 14"><path d="M2 2h10v10H2z" fill="#b9bdb6"/><circle cx="7" cy="7.500" r="3" fill="#4c5048"/><circle cx="4" cy="3" r="2" fill="#6b8a55"/></svg></div>
          <div class="tray">
            <svg width="6" height="4" style="margin-right:6px"><path d="M0 4l3-3 3 3z" fill="#ddd"/></svg>
            <svg width="12" height="11" viewBox="0 0 12 11" style="margin-right:3px"><path d="M3 .500h8.500v7H3zM0 3.500h4v7H0z" fill="#1b2026" stroke="#ddd" stroke-width=".8"/></svg>
            <svg width="12" height="11" viewBox="0 0 12 11" style="margin-right:6px"><path d="M1 4h2l3-3v9L3 7H1z" fill="none" stroke="#ddd" stroke-width=".8"/><path d="M8 3c1 1 1 4 0 5M10 2c1.500 1.500 1.500 5.500 0 7" fill="none" stroke="#ddd" stroke-width=".8"/></svg>
            <span>ENG</span>
            <div class="clock">10:46<br />16.05.2024</div>
            <svg width="16" height="16" viewBox="0 0 16 16" style="margin-right:15px"><path d="M1 1h10v8H5L3 11V9H1z" fill="#eee"/><path d="M3 3h6M3 5h6" stroke="#333" stroke-width=".7"/><circle cx="10.500" cy="11" r="4" fill="#333" stroke="#bbb" stroke-width=".6"/><text x="8.700" y="13.500" font-size="7" fill="#fff" font-family="Liberation Sans, sans-serif">7</text></svg>
          </div>
        </div>
      </div>
    `;
  }

  private row([exp, k, t]: [boolean, string, string]) {
    return html`<div class="row">
      <span class="chev">${exp ? html`<svg width="4" height="7"><path d="M.5.500l3 3-3 3" fill="none" stroke="#999"/></svg>` : ''}</span>
      <span class="box"><svg viewBox="0 0 8 8" width="6" height="6"><path d="M1 4l2 2 4-5" fill="none" stroke="#111" stroke-width="1.400"/></svg></span>
      <span class="gl"><svg viewBox="0 0 12 12" width="10" height="10">${I[k]}</svg></span>
      <span>${t}</span>
    </div>`;
  }
}
